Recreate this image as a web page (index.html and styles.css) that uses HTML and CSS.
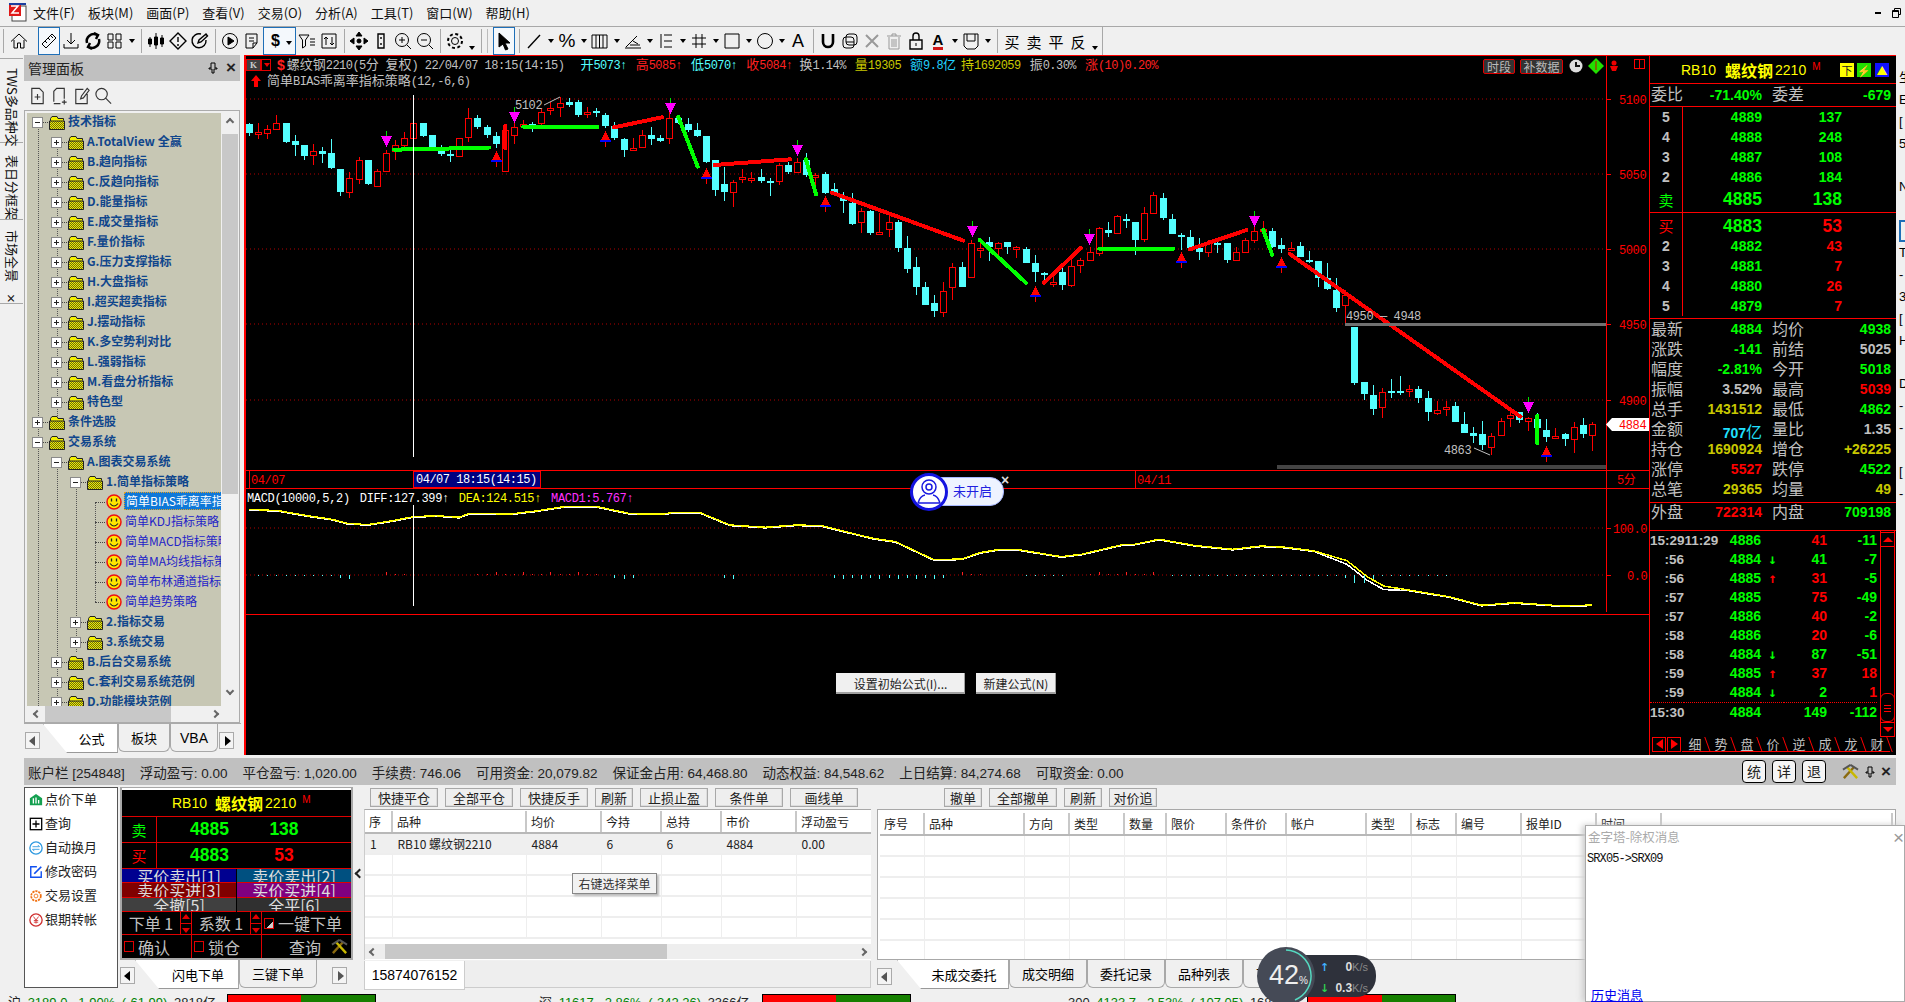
FILE: index.html
```html
<!DOCTYPE html>
<html lang="zh-CN">
<head>
<meta charset="utf-8">
<title>金字塔决策交易系统</title>
<link rel="stylesheet" href="styles.css">
</head>
<body>
<svg class="defs" width="0" height="0">
  <symbol id="plus" viewBox="0 0 11 11"><rect x=".5" y=".5" width="10" height="10" fill="#fff" stroke="#8a8a8a"/><path d="M3 5.5H8M5.5 3V8" stroke="#222"/></symbol>
  <symbol id="minus" viewBox="0 0 11 11"><rect x=".5" y=".5" width="10" height="10" fill="#fff" stroke="#8a8a8a"/><path d="M3 5.5H8" stroke="#222"/></symbol>
  <pattern id="dith" width="2" height="2" patternUnits="userSpaceOnUse"><rect width="2" height="2" fill="#f4f000"/><rect width="1" height="1" fill="#6a6a10"/><rect x="1" y="1" width="1" height="1" fill="#6a6a10"/></pattern>
  <symbol id="folder" viewBox="0 0 16 15"><path d="M1.500 13.500V3.500L3 1.500H8L9 3.500H14.500V5.500" fill="#f4f000" stroke="#222"/><path d="M.5 14.500V6H15.500V14.500Z" fill="url(#dith)" stroke="#222"/></symbol>
  <symbol id="smile" viewBox="0 0 16 16"><circle cx="8" cy="8" r="7" fill="#ffe600" stroke="#f01010" stroke-width="1.500"/><path d="M5.500 4.500V7.500M10.500 4.500V7.500" stroke="#222" stroke-width="1.300"/><path d="M4 9.500Q8 14.500 12 9.500" fill="none" stroke="#222" stroke-width="1.200"/></symbol>
  <symbol id="tools" viewBox="0 0 18 18"><path d="M2 16L13 4" stroke="#8a6a10" stroke-width="2.500"/><path d="M16 16L5 4" stroke="#c8b800" stroke-width="2.500"/><path d="M9 2L17 7M9 2L1 7" stroke="#555" stroke-width="2"/></symbol>
  <symbol id="pin" viewBox="0 0 10 12"><path d="M3 1H7V6H9V7H6V11H4V7H1V6H3Z" fill="none" stroke="#000"/></symbol>
</svg>

<header class="menubar">
  <span class="logo"><svg width="19" height="20" viewBox="0 0 19 20"><rect x="4" y="3" width="14" height="15" fill="#fff" stroke="#444"/><rect x="1" y="1" width="12" height="12" fill="#e01818"/><path d="M3 3H10L4 10H11" fill="none" stroke="#fff" stroke-width="1.500"/><rect x="1" y="0" width="17" height="2" fill="#1c3ea0"/></svg></span>
  <nav class="menu"><span>文件(F)</span><span>板块(M)</span><span>画面(P)</span><span>查看(V)</span><span>交易(O)</span><span>分析(A)</span><span>工具(T)</span><span>窗口(W)</span><span>帮助(H)</span></nav>
  <span class="winbtns"><svg width="8" height="4"><rect y="1" width="6" height="2" fill="#000"/></svg><svg width="9" height="10" viewBox="0 0 9 10"><path d="M2.500 2.500V.5H8.500V6.500H6.500M.5 2.500H6.500V9.500H.5Z" fill="none" stroke="#000"/><path d="M.5 3.500H6.500" stroke="#000"/></svg></span>
</header>

<div class="toolbar">
  <i class="sep first"></i>
  <span class="tb"><svg viewBox="0 0 20 20"><path d="M2 10.500L10 3L18 10.500M5 9V17H8.500V12H11.500V17H15V9"/></svg></span>
  <span class="tb sel gapl"><svg viewBox="0 0 20 20"><path d="M3 13L13 3L17 7L7 17ZM6 10L8 12M9 7L11 9M12 5L14 7"/></svg></span>
  <span class="tb"><svg viewBox="0 0 20 20"><path d="M10 2V13M6 9L10 13L14 9M3 13V17H17V13"/></svg></span>
  <span class="tb"><svg viewBox="0 0 20 20"><path class="thick" d="M4 12A7 7 0 0 1 14 4M16 8A7 7 0 0 1 6 16M11 2L15 4L13 8M9 18L5 16L7 12"/></svg></span>
  <span class="tb"><svg viewBox="0 0 20 20"><path d="M3 3H8V9H3ZM11 3H16V9H11ZM3 11H8V17H3ZM11 11H16V17H11Z"/></svg></span><i class="dd"></i>
  <i class="sep"></i>
  <span class="tb"><svg viewBox="0 0 20 20"><path d="M4 6V16M10 2V18M16 4V16"/><path class="fill" d="M2.500 8H5.500V13H2.500ZM8.500 6H11.500V14H8.500ZM14.500 7H17.500V13H14.500Z"/></svg></span>
  <span class="tb"><svg viewBox="0 0 20 20"><path class="thin2" d="M10 2L18 10L10 18L2 10ZM10 6V11M10 13V15"/></svg></span>
  <span class="tb"><svg viewBox="0 0 20 20"><path class="thin2" d="M16 9A7 7 0 1 1 11 3M8 12L9 9L16 3L17.500 5L11 11Z"/></svg></span>
  <i class="sep"></i>
  <span class="tb"><svg viewBox="0 0 20 20"><circle cx="10" cy="10" r="7.500"/><path class="fill" d="M8 6L14 10L8 14Z"/></svg></span>
  <span class="tb"><svg viewBox="0 0 20 20"><path d="M4 3H15V12L11 17H4ZM7 7H12M7 10H12M15 12H11V17"/></svg></span>
  <span class="tb sel wide"><b class="glyph">$</b><i class="dd"></i></span>
  <span class="tb"><svg viewBox="0 0 20 20"><path d="M2 4H12L8.500 9V15L5.500 17V9ZM13 8H18M13 11H18M13 14H18"/></svg></span>
  <span class="tb"><svg viewBox="0 0 20 20"><path d="M3 3H17V17H3ZM7 6V14M5 8L7 6L9 8M13 14V6M11 12L13 14L15 12"/></svg></span>
  <i class="sep"></i>
  <span class="tb"><svg viewBox="0 0 20 20"><path class="fill" d="M10 1L13 5H7ZM10 19L7 15H13ZM1 10L5 7V13ZM19 10L15 13V7Z"/><circle class="fill" cx="10" cy="10" r="2"/></svg></span>
  <span class="tb"><svg viewBox="0 0 20 20"><path class="thin2" d="M7 3H13V17H7ZM10 6V8M10 12V14"/></svg></span>
  <span class="tb"><svg viewBox="0 0 20 20"><circle cx="9" cy="9" r="6.500"/><path d="M14 14L18 18M6 9H12M9 6V12"/></svg></span>
  <span class="tb"><svg viewBox="0 0 20 20"><circle cx="9" cy="9" r="6.500"/><path d="M14 14L18 18M6 9H12"/></svg></span>
  <i class="sep"></i>
  <span class="tb"><svg viewBox="0 0 20 20"><circle cx="10" cy="10" r="3.500"/><circle class="dash" cx="10" cy="10" r="7"/></svg></span><i class="dd low"></i>
  <i class="sep"></i><i class="grip"></i>
  <span class="tb sel"><svg viewBox="0 0 20 20"><path class="fill" d="M5 2L16 12H11L14 18L11.500 19L9 13L5 16Z"/></svg></span>
  <i class="sep"></i>
  <span class="tb"><svg viewBox="0 0 20 20"><path class="thin2" d="M4 17L16 4"/></svg></span><i class="dd"></i>
  <span class="tb"><b class="glyph big">%</b></span><i class="dd"></i>
  <span class="tb"><svg viewBox="0 0 20 20"><path d="M2 4H17V17H2ZM6 4V17M9.500 4V17M13 4V17"/></svg></span><i class="dd"></i>
  <span class="tb"><svg viewBox="0 0 20 20"><path d="M2 17H18M3 16L14 5M7 14H17M10 10L15 13"/></svg></span><i class="dd"></i>
  <span class="tb"><svg viewBox="0 0 20 20"><path d="M5 3V17M8 4H16M8 10H16M8 16H16"/></svg></span><i class="dd"></i>
  <span class="tb"><svg viewBox="0 0 20 20"><path d="M7 3V17M13 3V17M3 7H17M3 13H17"/></svg></span><i class="dd"></i>
  <span class="tb"><svg viewBox="0 0 20 20"><path d="M3 3H17V17H3Z"/></svg></span><i class="dd"></i>
  <span class="tb"><svg viewBox="0 0 20 20"><circle cx="10" cy="10" r="7.500"/></svg></span><i class="dd"></i>
  <span class="tb"><b class="glyph thinf">A</b></span>
  <i class="sep"></i>
  <span class="tb"><svg viewBox="0 0 20 20"><path class="mag" d="M5 3V11A5 5 0 0 0 15 11V3"/></svg></span>
  <span class="tb"><svg viewBox="0 0 20 20"><rect x="6" y="3" width="11" height="11" rx="3"/><rect x="3" y="6" width="11" height="11" rx="3"/><path d="M6 11H14"/></svg></span>
  <span class="tb"><svg viewBox="0 0 20 20"><path class="gray" d="M4 4L16 16M16 4L4 16"/></svg></span>
  <span class="tb"><svg viewBox="0 0 20 20"><path class="gray1" d="M5 6V18H15V6M3 5H17M8 5V3H12V5M8 8V16M10 8V16M12 8V16"/></svg></span>
  <span class="tb"><svg viewBox="0 0 20 20"><path class="thin2" d="M4 9H16V18H4ZM7 9V5A3 3 0 0 1 13 5V9"/><path d="M10 12V15"/></svg></span>
  <span class="tb"><b class="glyph ua">A</b></span><i class="dd"></i>
  <span class="tb"><svg viewBox="0 0 20 20"><path d="M3 3H17V15L14 18H6L3 15ZM6 3V10H14V3"/></svg></span><i class="dd"></i>
  <i class="sep"></i>
  <span class="tb z13">买</span><span class="tb z13">卖</span><span class="tb z13">平</span><span class="tb z13">反</span><i class="dd low"></i>
  <i class="sep end"></i>
</div>

<main class="main">
  <aside class="rail">
    <div class="railtab short">TWS多品种交</div>
    <div class="railtab">表日分框架</div>
    <div class="railtab last">市场全景<b class="railx">×</b></div>
  </aside>

  <section class="side">
    <div class="panelhead"><span>管理面板</span><span class="headbtns"><svg width="10" height="12"><use href="#pin"/></svg><b>×</b></span></div>
    <div class="sidetools">
      <svg viewBox="0 0 20 20"><path d="M4 2H12L16 6V18H4ZM7 11H13M10 8V14"/></svg>
      <svg viewBox="0 0 20 20"><path d="M4 16V5L7 2H15V13M4 18H11M15 14V19M12.500 16.500H17.500"/></svg>
      <svg viewBox="0 0 20 20"><path d="M12 3H4V18H16V8M9 13L10 10L16 2L18 4L12 12Z"/></svg>
      <svg viewBox="0 0 20 20"><circle cx="8" cy="8" r="6"/><path d="M12 12L18 18"/></svg>
    </div>
    <div class="treebox">
      <div class="treewrap">
        <div class="tree">
          <div class="row"><svg class="pm"><use href="#minus"/></svg><svg class="fd"><use href="#folder"/></svg><span>技术指标</span></div>
          <div class="row l1"><svg class="pm"><use href="#plus"/></svg><svg class="fd"><use href="#folder"/></svg><span>A.TotalView 全赢</span></div>
          <div class="row l1"><svg class="pm"><use href="#plus"/></svg><svg class="fd"><use href="#folder"/></svg><span>B.趋向指标</span></div>
          <div class="row l1"><svg class="pm"><use href="#plus"/></svg><svg class="fd"><use href="#folder"/></svg><span>C.反趋向指标</span></div>
          <div class="row l1"><svg class="pm"><use href="#plus"/></svg><svg class="fd"><use href="#folder"/></svg><span>D.能量指标</span></div>
          <div class="row l1"><svg class="pm"><use href="#plus"/></svg><svg class="fd"><use href="#folder"/></svg><span>E.成交量指标</span></div>
          <div class="row l1"><svg class="pm"><use href="#plus"/></svg><svg class="fd"><use href="#folder"/></svg><span>F.量价指标</span></div>
          <div class="row l1"><svg class="pm"><use href="#plus"/></svg><svg class="fd"><use href="#folder"/></svg><span>G.压力支撑指标</span></div>
          <div class="row l1"><svg class="pm"><use href="#plus"/></svg><svg class="fd"><use href="#folder"/></svg><span>H.大盘指标</span></div>
          <div class="row l1"><svg class="pm"><use href="#plus"/></svg><svg class="fd"><use href="#folder"/></svg><span>I.超买超卖指标</span></div>
          <div class="row l1"><svg class="pm"><use href="#plus"/></svg><svg class="fd"><use href="#folder"/></svg><span>J.摆动指标</span></div>
          <div class="row l1"><svg class="pm"><use href="#plus"/></svg><svg class="fd"><use href="#folder"/></svg><span>K.多空势利对比</span></div>
          <div class="row l1"><svg class="pm"><use href="#plus"/></svg><svg class="fd"><use href="#folder"/></svg><span>L.强弱指标</span></div>
          <div class="row l1"><svg class="pm"><use href="#plus"/></svg><svg class="fd"><use href="#folder"/></svg><span>M.看盘分析指标</span></div>
          <div class="row l1"><svg class="pm"><use href="#plus"/></svg><svg class="fd"><use href="#folder"/></svg><span>特色型</span></div>
          <div class="row"><svg class="pm"><use href="#plus"/></svg><svg class="fd"><use href="#folder"/></svg><span>条件选股</span></div>
          <div class="row"><svg class="pm"><use href="#minus"/></svg><svg class="fd"><use href="#folder"/></svg><span>交易系统</span></div>
          <div class="row l1"><svg class="pm"><use href="#minus"/></svg><svg class="fd"><use href="#folder"/></svg><span>A.图表交易系统</span></div>
          <div class="row l2"><svg class="pm"><use href="#minus"/></svg><svg class="fd"><use href="#folder"/></svg><span>1.简单指标策略</span></div>
          <div class="row leaf"><svg class="sm"><use href="#smile"/></svg><span class="picked">简单BIAS乖离率指标策略</span></div>
          <div class="row leaf"><svg class="sm"><use href="#smile"/></svg><span>简单KDJ指标策略</span></div>
          <div class="row leaf"><svg class="sm"><use href="#smile"/></svg><span>简单MACD指标策略</span></div>
          <div class="row leaf"><svg class="sm"><use href="#smile"/></svg><span>简单MA均线指标策略</span></div>
          <div class="row leaf"><svg class="sm"><use href="#smile"/></svg><span>简单布林通道指标策略</span></div>
          <div class="row leaf"><svg class="sm"><use href="#smile"/></svg><span>简单趋势策略</span></div>
          <div class="row l2"><svg class="pm"><use href="#plus"/></svg><svg class="fd"><use href="#folder"/></svg><span>2.指标交易</span></div>
          <div class="row l2"><svg class="pm"><use href="#plus"/></svg><svg class="fd"><use href="#folder"/></svg><span>3.系统交易</span></div>
          <div class="row l1"><svg class="pm"><use href="#plus"/></svg><svg class="fd"><use href="#folder"/></svg><span>B.后台交易系统</span></div>
          <div class="row l1"><svg class="pm"><use href="#plus"/></svg><svg class="fd"><use href="#folder"/></svg><span>C.套利交易系统范例</span></div>
          <div class="row l1"><svg class="pm"><use href="#plus"/></svg><svg class="fd"><use href="#folder"/></svg><span>D.功能模块范例</span></div>
        </div>
        <div class="vscroll"><i class="chev up"></i><i class="vthumb"></i><i class="chev down"></i></div>
      </div>
      <div class="hscroll"><i class="chev left"></i><i class="hthumb"></i><i class="chev right"></i></div>
    </div>
    <div class="tabs sidetabs">
      <i class="tabarrow l"></i>
      <span class="tab on t1">公式</span><span class="tab t2">板块</span><span class="tab t3">VBA</span>
      <i class="tabarrow r dark"></i>
    </div>
  </section>

  <section class="chart">
    <div class="plot">
      <svg id="plot" class="plotsvg" viewBox="244 55 1405 700" width="1405" height="700">
        <g id="grid" class="gridlines">
          <path d="M246 99H1606M246 174H1606M246 249H1606M246 324H1606M246 400H1606M246 528H1606M246 575H1606"/>
        </g>
        <path class="redline" d="M244.500 55V755M245.500 55V755M244 470H1649M244 488H1649M244 614H1649M1606.500 55V470M1606.500 488V612M1606 99H1611M1606 174H1611M1606 249H1611M1606 324H1611M1606 400H1611M1606 528H1611M1606 575H1611M249.500 471V488M1135.500 471V488M1606.500 471V488"/>
        <g id="series"></g>
        <rect class="navy" x="413.500" y="471.500" width="127" height="16"/>
        <text class="ax" x="1619" y="104">5100</text>
        <text class="ax" x="1619" y="179">5050</text>
        <text class="ax" x="1619" y="254">5000</text>
        <text class="ax" x="1619" y="329">4950</text>
        <text class="ax" x="1619" y="405">4900</text>
        <text class="ax" x="1613" y="533">100.0</text>
        <text class="ax" x="1627" y="580">0.0</text>
        <text class="ax" x="251" y="484">04/07</text>
        <text class="ax" x="1137" y="484">04/11</text>
        <text class="ax cj" x="1617" y="484">5分</text>
        <text class="wt" x="416" y="483">04/07 18:15(14:15)</text>
        <text class="gy" x="515" y="109">5102</text>
        <path class="gyl" d="M544 105L560 97"/>
        <text class="gy" x="1346" y="320">4950 — 4948</text>
        <text class="gy" x="1444" y="454">4863</text>
        <path class="gyl" d="M1474 448L1490 455"/>
        <path class="tag" d="M1606 424.500L1612 418H1649V431H1612Z"/>
        <text class="ax" x="1619" y="429">4884</text>
      </svg>
      <div class="ttl ttl1">
        <span class="kbox">K</span><span class="kdrop"></span><b class="dollar">$</b>
        <span class="t gy1 gapt"><em>螺纹钢</em>2210(5<em>分</em> <em>复权</em>) 22/04/07 18:15(14:15)</span>
        <span class="t cy gapo"><em>开</em>5073↑</span><span class="t rd"><em>高</em>5085↑</span><span class="t cy"><em>低</em>5070↑</span><span class="t rd"><em>收</em>5084↑</span>
        <span class="t gy1 tight2"><em>换</em>1.14%</span><span class="t ye"><em>量</em>19305</span><span class="t bl"><em>额</em>9.8<em>亿</em></span><span class="t ye tight4"><em>持</em>1692059</span><span class="t gy1"><em>振</em>0.30%</span><span class="t rd"><em>涨</em>(10)0.20%</span>
      </div>
      <div class="ttl ttl2"><svg width="10" height="12" viewBox="0 0 10 12"><path d="M5 0L10 6H7V12H3V6H0Z" fill="#f00"/></svg><span class="t gy1"><em>简单</em>BIAS<em>乖离率指标策略</em>(12,-6,6)</span></div>
      <div class="ttl ttl3"><span class="t wh">MACD(10000,5,2)</span><span class="t wh">DIFF:127.399↑</span><span class="t yy">DEA:124.515↑</span><span class="t mg">MACD1:5.767↑</span></div>
      <div class="chipset">
        <span class="chip c1">时段</span><span class="chip c2">补数据</span>
        <svg width="14" height="14" viewBox="0 0 14 14"><circle cx="7" cy="7" r="6.500" fill="#ddd"/><path d="M7 3V7H11" stroke="#111" stroke-width="2" fill="none"/></svg>
        <svg width="16" height="16" viewBox="0 0 16 16"><path d="M8 0L16 8L8 16L0 8Z" fill="#22e000"/><path d="M8 3V12" stroke="#c00"/></svg>
        <svg width="10" height="12" viewBox="0 0 10 12"><circle cx="5" cy="3" r="2.500" fill="#e00"/><path d="M1 6H9L7 11H3Z" fill="#e00"/></svg>
      </div>
      <i class="splitbox"></i>
      <div class="action"><button class="winbtn b1">设置初始公式(I)...</button><button class="winbtn b2">新建公式(N)</button></div>
    </div>

    <aside class="quote">
      <div class="qhead">
        <span class="qn1">RB10</span><b class="qn2">螺纹钢</b><span class="qn3">2210</span><sup class="qn4">M</sup>
        <i class="qico yl">下</i><i class="qico gr">⚡</i><i class="qico bu">▲</i>
      </div>
      <div class="qline four"><span>委比</span><b class="g">-71.40%</b><span>委差</span><b class="g">-679</b></div>
      <div class="book">
        <span class="n">5</span><b class="g">4889</b><b class="g">137</b>
        <span class="n">4</span><b class="g">4888</b><b class="g">248</b>
        <span class="n">3</span><b class="g">4887</b><b class="g">108</b>
        <span class="n">2</span><b class="g">4886</b><b class="g">184</b>
        <span class="n tall g lab">卖</span><b class="g tall bigv">4885</b><b class="g tall bigv">138</b>
      </div>
      <div class="book bids">
        <span class="n tall2 r lab">买</span><b class="g tall2 bigv">4883</b><b class="r tall2 bigv">53</b>
        <span class="n">2</span><b class="g">4882</b><b class="r">43</b>
        <span class="n">3</span><b class="g">4881</b><b class="r">7</b>
        <span class="n">4</span><b class="g">4880</b><b class="r">26</b>
        <span class="n">5</span><b class="g">4879</b><b class="r">7</b>
      </div>
      <div class="stats">
        <span>最新</span><b class="g">4884</b><span>均价</span><b class="g">4938</b>
        <span>涨跌</span><b class="g">-141</b><span>前结</span><b class="s">5025</b>
        <span>幅度</span><b class="g">-2.81%</b><span>今开</span><b class="g">5018</b>
        <span>振幅</span><b class="s">3.52%</b><span>最高</span><b class="r">5039</b>
        <span>总手</span><b class="y">1431512</b><span>最低</span><b class="g">4862</b>
        <span>金额</span><b class="c">707<em>亿</em></b><span>量比</span><b class="s">1.35</b>
        <span>持仓</span><b class="y">1690924</b><span>增仓</span><b class="y">+26225</b>
        <span>涨停</span><b class="r">5527</b><span>跌停</span><b class="g">4522</b>
        <span>总笔</span><b class="y">29365</b><span>均量</span><b class="y">49</b>
      </div>
      <div class="qline outer"><span>外盘</span><b class="r">722314</b><span>内盘</span><b class="g">709198</b></div>
      <div class="ticks">
        <div class="tickrows">
          <span class="tm first">15:2911:29</span><b class="g">4886</b><i></i><b class="r">41</b><b class="g">-11</b>
          <span class="tm">:56</span><b class="g">4884</b><i class="g">↓</i><b class="g">41</b><b class="g">-7</b>
          <span class="tm">:56</span><b class="g">4885</b><i class="r">↑</i><b class="r">31</b><b class="g">-5</b>
          <span class="tm">:57</span><b class="g">4885</b><i></i><b class="r">75</b><b class="g">-49</b>
          <span class="tm">:57</span><b class="g">4886</b><i></i><b class="r">40</b><b class="g">-2</b>
          <span class="tm">:58</span><b class="g">4886</b><i></i><b class="r">20</b><b class="g">-6</b>
          <span class="tm">:58</span><b class="g">4884</b><i class="g">↓</i><b class="g">87</b><b class="g">-51</b>
          <span class="tm">:59</span><b class="g">4885</b><i class="r">↑</i><b class="r">37</b><b class="r">18</b>
          <span class="tm">:59</span><b class="g">4884</b><i class="g">↓</i><b class="g">2</b><b class="r">1</b>
          <span class="tm first dot">15:30</span><b class="g dot">4884</b><i class="dot"></i><b class="g dot">149</b><b class="g dot">-112</b>
        </div>
        <div class="qscroll"><i class="qsup"></i><i class="qsthumb"></i><i class="qsdn"></i></div>
      </div>
      <div class="qtabs">
        <i class="qarrow la"></i><i class="qarrow ra"></i>
        <span class="qt on">细</span><span class="qt">势</span><span class="qt">盘</span><span class="qt">价</span><span class="qt">逆</span><span class="qt">成</span><span class="qt">龙</span><span class="qt">财</span>
      </div>
    </aside>
  </section>

  <aside class="edge"><span>生</span><span>E</span><span>[</span><span>5</span><span>&nbsp;</span><span>N</span><span>&nbsp;</span><span class="ebox"></span><span>T</span><span>-</span><span>3</span><span>[</span><span>H</span><span>&nbsp;</span><span>D</span><span>-</span><span>-</span><span>&nbsp;</span><span>[</span><span>-</span></aside>
</main>

<div class="acct">
  <span>账户栏 [254848]</span><span>浮动盈亏: 0.00</span><span>平仓盈亏: 1,020.00</span><span>手续费: 746.06</span><span>可用资金: 20,079.82</span><span>保证金占用: 64,468.80</span><span>动态权益: 84,548.62</span><span>上日结算: 84,274.68</span><span>可取资金: 0.00</span>
  <span class="acctbtns"><i>统</i><i>详</i><i>退</i><svg width="17" height="17"><use href="#tools"/></svg><svg width="10" height="12"><use href="#pin"/></svg><b>×</b></span>
</div>

<div class="lower">
  <nav class="opmenu">
    <a><svg viewBox="0 0 16 16"><path d="M8 1L15 6V14H1V6Z" fill="#14a050"/><path d="M5 6V12M8 5V12M11 8V12" stroke="#fff" stroke-width="1.500"/></svg>点价下单</a>
    <a><svg viewBox="0 0 16 16"><rect x="1.500" y="1.500" width="13" height="13" fill="#fff" stroke="#000" stroke-width="1.500"/><path d="M8 4V12M4 8H12" stroke="#000" stroke-width="1.500"/></svg>查询</a>
    <a><svg viewBox="0 0 16 16"><circle cx="8" cy="8" r="7" fill="#fff" stroke="#2f9ae0" stroke-width="1.500"/><path d="M4 6.500H12L10 4.500M12 9.500H4L6 11.500" fill="none" stroke="#2f9ae0"/></svg>自动换月</a>
    <a><svg viewBox="0 0 16 16"><path d="M9 2H2V14H14V7" fill="none" stroke="#1050f0" stroke-width="1.600"/><path d="M6 10L14 2" stroke="#1050f0" stroke-width="2"/></svg>修改密码</a>
    <a><svg viewBox="0 0 16 16"><circle cx="8" cy="8" r="5.500" fill="none" stroke="#f07010" stroke-width="2" stroke-dasharray="2.500 1"/><circle cx="8" cy="8" r="2.200" fill="none" stroke="#f07010"/></svg>交易设置</a>
    <a><svg viewBox="0 0 16 16"><circle cx="8" cy="8" r="7" fill="#fff" stroke="#d03030" stroke-width="1.500"/><path d="M5 4L8 8L11 4M8 8V12M5.500 8.500H10.500M5.500 10.500H10.500" fill="none" stroke="#d03030"/></svg>银期转帐</a>
  </nav>

  <div class="flash">
    <div class="mini">
      <div class="mhead"><span class="qn1">RB10</span><b class="qn2">螺纹钢</b><span class="qn3">2210</span><sup class="qn4">M</sup></div>
      <div class="mrow"><span class="g">卖</span><b class="g">4885</b><b class="g">138</b></div>
      <div class="mrow"><span class="r">买</span><b class="g">4883</b><b class="r">53</b></div>
      <div class="mbtns">
        <span class="navyb">买价卖出[1]</span><span class="tealb">卖价卖出[2]</span>
        <span class="maroonb">卖价买进[3]</span><span class="purpleb">买价买进[4]</span>
        <span class="grayb">全撤[5]</span><span class="darkb">全平[6]</span>
      </div>
      <div class="mopt o1"><span>下单 1</span><i class="spin"></i><span>系数 1</span><i class="spin"></i><span class="opt"><i class="cb chk"></i>一键下单</span></div>
      <div class="mopt o2"><span class="opt"><i class="cb"></i>确认</span><span class="opt"><i class="cb"></i>锁仓</span><span class="opt end">查询<svg width="17" height="17"><use href="#tools"/></svg></span></div>
    </div>
    <div class="tabs flashtabs">
      <i class="tabarrow l dark"></i>
      <span class="tab on t4">闪电下单</span><span class="tab t5">三键下单</span>
      <i class="tabarrow r gap"></i>
    </div>
  </div>

  <div class="collapse"><i class="chev left blk"></i></div>

  <div class="pos">
    <div class="btnrow"><button>快捷平仓</button><button>全部平仓</button><button>快捷反手</button><button class="w38">刷新</button><button>止损止盈</button><button>条件单</button><button>画线单</button></div>
    <div class="tblbox">
      <div class="tblclip">
        <table class="grid left">
          <colgroup><col class="c27"><col class="c134"><col class="c75"><col class="c60"><col class="c60"><col class="c75"><col class="c76"></colgroup>
          <thead><tr><th>序</th><th>品种</th><th>均价</th><th>今持</th><th>总持</th><th>市价</th><th>浮动盈亏</th></tr></thead>
          <tbody>
            <tr class="hl"><td>1</td><td>RB10 螺纹钢2210</td><td>4884</td><td>6</td><td>6</td><td>4884</td><td>0.00</td></tr>
            <tr><td></td><td></td><td></td><td></td><td></td><td></td><td></td></tr>
            <tr><td></td><td></td><td></td><td></td><td></td><td></td><td></td></tr>
            <tr><td></td><td></td><td></td><td></td><td></td><td></td><td></td></tr>
            <tr><td></td><td></td><td></td><td></td><td></td><td></td><td></td></tr>
          </tbody>
        </table>
      </div>
      <div class="hscroll big"><i class="chev left"></i><i class="hthumb wide"></i><i class="chev right"></i></div>
    </div>
    <div class="tabs acctabs"><span class="tab on t6">15874076152</span><span class="rest"></span></div>
  </div>

  <div class="orders">
    <div class="btnrow rb"><button class="w38">撤单</button><button>全部撤单</button><button class="w38">刷新</button><button class="w48">对价追</button></div>
    <div class="tblbox rtb">
      <table class="grid right">
        <colgroup><col class="d44"><col class="d100"><col class="d45"><col class="d55"><col class="d42"><col class="d60"><col class="d60"><col class="d80"><col class="d45"><col class="d45"><col class="d65"><col class="d75"><col class="d65"><col></colgroup>
        <thead><tr><th>序号</th><th>品种</th><th>方向</th><th>类型</th><th>数量</th><th>限价</th><th>条件价</th><th>帐户</th><th>类型</th><th>标志</th><th>编号</th><th>报单ID</th><th>时间</th><th></th></tr></thead>
        <tbody>
          <tr><td></td><td></td><td></td><td></td><td></td><td></td><td></td><td></td><td></td><td></td><td></td><td></td><td></td><td></td></tr>
          <tr><td></td><td></td><td></td><td></td><td></td><td></td><td></td><td></td><td></td><td></td><td></td><td></td><td></td><td></td></tr>
          <tr><td></td><td></td><td></td><td></td><td></td><td></td><td></td><td></td><td></td><td></td><td></td><td></td><td></td><td></td></tr>
          <tr><td></td><td></td><td></td><td></td><td></td><td></td><td></td><td></td><td></td><td></td><td></td><td></td><td></td><td></td></tr>
          <tr><td></td><td></td><td></td><td></td><td></td><td></td><td></td><td></td><td></td><td></td><td></td><td></td><td></td><td></td></tr>
          <tr><td></td><td></td><td></td><td></td><td></td><td></td><td></td><td></td><td></td><td></td><td></td><td></td><td></td><td></td></tr>
        </tbody>
      </table>
    </div>
    <div class="tabs ordertabs">
      <i class="tabarrow l"></i>
      <span class="tab on t7">未成交委托</span><span class="tab t8">成交明细</span><span class="tab t8">委托记录</span><span class="tab t8">品种列表</span><span class="tab t8">下单列表</span>
    </div>
  </div>
</div>

<footer class="status">
  <span class="idx i1">沪 <u>3189.0</u> <u>-1.90%</u> <u>(-61.99)</u> 2818亿</span><i class="bar"></i>
  <span class="idx i2">深 <u>11617</u> <u>-2.86%</u> <u>(-342.26)</u> 3366亿</span><i class="bar"></i>
  <span class="idx i3">300 <u>4133.7</u> <u>-2.53%</u> <u>(-107.05)</u> 1682亿</span><i class="bar"></i>
</footer>

<div class="tip">右键选择菜单</div>

<div class="cam">
  <span class="camhead"><svg width="26" height="28" viewBox="0 0 26 28"><circle cx="13" cy="9" r="7" fill="none" stroke="#1a1ae0" stroke-width="1.500"/><circle cx="13" cy="9" r="3" fill="none" stroke="#1a1ae0" stroke-width="1.500"/><path d="M2 25Q4 18 9 17M24 25Q22 18 17 17M2 25H24" fill="none" stroke="#1a1ae0" stroke-width="1.500"/></svg></span>
  <span class="camtxt">未开启</span><b class="camx">×</b>
</div>

<div class="speed">
  <div class="speedpill">
    <span class="sp"><i class="up">↑</i><b>0</b><em>K/s</em></span>
    <span class="sp"><i class="dn">↓</i><b>0.3</b><em>K/s</em></span>
  </div>
  <div class="gauge"><svg width="58" height="58" viewBox="0 0 58 58"><path d="M29 3A26 26 0 0 1 38 53" fill="none" stroke="#55d8c0" stroke-width="1.500"/></svg><span class="pct">42<small>%</small></span></div>
</div>

<aside class="notice">
  <div class="ntitle"><span>金字塔-除权消息</span><b>×</b></div>
  <div class="nbody">SRX05-&gt;SRX09</div>
  <a class="nlink">历史消息</a>
</aside>

<script src="chart.js"></script>
</body>
</html>
```

FILE: styles.css
```css
* { box-sizing: border-box; }
html, body { margin: 0; padding: 0; }
body {
  width: 1905px; height: 1002px; overflow: hidden; position: relative;
  background: #f0f0f0; color: #000;
  font: 13px/1.2 "Liberation Sans", "Noto Sans CJK SC", sans-serif;
}
i, em { font-style: normal; }
.defs { position: absolute; }
.g { color: #00ff00; } .r { color: #ff0000; } .y { color: #c8c800; } .c { color: #20e0ff; } .s { color: #c0c0c0; }

/* menu */
.menubar { height: 27px; display: flex; align-items: center; border-bottom: 1px solid #a8a8a8; padding-left: 8px; }
.logo { width: 25px; height: 20px; }
.menu { display: flex; gap: 13px; font-family: "Noto Sans CJK SC", sans-serif; color: #111; }
.menu span { white-space: nowrap; }
.winbtns { margin-left: auto; margin-right: 4px; display: flex; gap: 9px; align-items: center; }

/* toolbar */
.toolbar { height: 28px; display: flex; align-items: center; position: relative; }
.sep { width: 1px; height: 24px; background: #a8a8a8; margin: 0 3.500px; flex: none; }
.sep.first { margin: 0 4px 0 3px; }
.sep.end { margin: 0 0 0 2px; height: 28px; }
.grip { width: 2px; height: 24px; border-left: 1px solid #bbb; margin: 0 4px 0 2px; flex: none; }
.tb { width: 22px; height: 28px; display: flex; align-items: center; justify-content: center; flex: none; position: relative; }
.tb svg { width: 20px; height: 20px; fill: none; stroke: #000; stroke-width: 1; }
.tb .fill { fill: #000; }
.tb .thick { stroke-width: 2.5; }
.tb .thin2 { stroke-width: 1.4; }
.tb .mag { stroke-width: 2.6; }
.tb .gray { stroke: #999; stroke-width: 2; }
.tb .gray1 { stroke: #999; }
.tb .dash { stroke-width: 2; stroke-dasharray: 3 2.5; }
.tb.sel { border: 1px solid #1e6fb8; height: 28px; background: #f4f8fc; }
.tb.gapl { margin-left: 8px; }
.tb.wide { width: 33px; justify-content: flex-start; padding-left: 7px; }
.dd { width: 0; height: 0; border: 3px solid transparent; border-top: 4px solid #000; border-bottom: 0; margin: 0 2.500px; flex: none; }
.dd.low { margin-top: 14px; }
.tb.wide .dd { position: absolute; right: 1px; top: 13px; }
.glyph { font: bold 16px "Liberation Sans", sans-serif; }
.glyph.big { font: 19px "Liberation Sans", sans-serif; }
.glyph.thinf { font: 18px "Liberation Sans", sans-serif; }
.glyph.ua { font: bold 15px "Liberation Sans", sans-serif; border-bottom: 3px solid #d01818; line-height: 14px; }
.z13 { font: 15px "Noto Sans CJK SC", sans-serif; }

/* main */
.main { display: flex; height: 700px; }
.rail { width: 24px; flex: none; padding-top: 3px; }
.railtab { writing-mode: vertical-rl; text-orientation: sideways; height: 77px; width: 23px; padding-top: 12px; display: flex; align-items: center; font: 13px/22px "Noto Sans CJK SC", sans-serif; border-bottom: 1px solid #a8a8a8; color: #111; white-space: nowrap; }
.railtab.short { height: 85px; border-top: 1px solid #a8a8a8; padding-top: 9px; }
.railtab.last { height: 84px; padding-top: 10px; }
.railx { font: 15px "Liberation Sans", sans-serif; margin-top: 12px; }

.side { width: 216px; flex: none; margin-right: 4px; }
.panelhead { height: 26px; background: #c0c0c0; display: flex; align-items: center; justify-content: space-between; padding: 0 4px 0 4px; font: 14px "Noto Sans CJK SC", sans-serif; color: #222; }
.headbtns { display: flex; gap: 8px; align-items: center; }
.headbtns b, .acctbtns b { font: bold 17px "Liberation Sans", sans-serif; }
.sidetools { height: 29px; display: flex; align-items: center; gap: 3px; padding-left: 4px; }
.sidetools svg { width: 19px; height: 20px; fill: none; stroke: #333; stroke-width: 1.2; }
.treebox { height: 613px; border: 1px solid #ababab; border-left-width: 1px; background: #f0f0f0; }
.treewrap { height: 595px; display: flex; }
.tree {
  width: 194px; margin: 2px 0 0 2px; overflow: hidden; background-color: #c7c7b4; flex: none;
  background-image:
    repeating-linear-gradient(to bottom, #555 0 1px, transparent 1px 2px),
    repeating-linear-gradient(to bottom, #555 0 1px, transparent 1px 2px),
    repeating-linear-gradient(to bottom, #555 0 1px, transparent 1px 2px),
    repeating-linear-gradient(to bottom, #555 0 1px, transparent 1px 2px),
    repeating-linear-gradient(to bottom, #555 0 1px, transparent 1px 2px);
  background-repeat: no-repeat;
  background-size: 1px 100%, 1px 280px, 1px 250px, 1px 170px, 1px 100px;
  background-position: 11px 10px, 30px 24px, 30px 350px, 49px 370px, 68px 390px;
}
.row { height: 20px; display: flex; align-items: center; padding: 0 0 3px 5px; position: relative; font: bold 12px "Noto Sans CJK SC", sans-serif; color: #10468c; white-space: nowrap; }
.row:first-child { margin-top: -1px; }
.row.l1 { padding-left: 24px; }
.row.l2 { padding-left: 43px; }
.row.leaf { padding-left: 79px; font-weight: 400; color: #2424c8; }
.row::before { content: ""; position: absolute; width: 7px; left: 14px; top: 10px; border-top: 1px dotted #444; }
.row.l1::before { left: 33px; }
.row.l2::before { left: 52px; }
.row.leaf::before { left: 68px; width: 10px; }
.pm { width: 11px; height: 11px; flex: none; margin-top: 3px; position: relative; }
.fd { width: 16px; height: 15px; flex: none; margin: 3px 3px 0 6px; position: relative; }
.sm { width: 16px; height: 16px; flex: none; margin: 3px 3px 0 0; position: relative; }
.picked { background: #0f78d8; color: #fff; outline: 1px dotted #e8a020; outline-offset: -1px; line-height: 18px; padding-left: 2px; margin-left: -1px; }
.vscroll { width: 16px; margin-left: 1px; position: relative; display: flex; flex-direction: column; align-items: center; }
.vthumb { width: 16px; height: 360px; background: #c8c8c8; margin-top: 9px; }
.chev { width: 6px; height: 6px; border-left: 2px solid #666; border-top: 2px solid #666; flex: none; }
.chev.up { transform: rotate(45deg); margin-top: 8px; }
.chev.down { transform: rotate(225deg); margin-top: auto; margin-bottom: 12px; }
.chev.left { transform: rotate(-45deg); }
.chev.right { transform: rotate(135deg); margin-left: auto; }
.chev.blk { border-color: #222; width: 7px; height: 7px; }
.hscroll { height: 16px; display: flex; align-items: center; padding: 0 21px 0 9px; background: #f0f0f0; }
.hthumb { width: 126px; height: 16px; background: #c8c8c8; margin-left: 5px; }

/* tabs */
.tabs { display: flex; align-items: flex-start; }
.tab { height: 28px; display: flex; align-items: center; justify-content: center; background: #f0f0f0; border: 1px solid #a8a8a8; border-top: 0; border-radius: 0 0 6px 6px; font: 13px "Noto Sans CJK SC", sans-serif; flex: none; }
.tab.on { background: #fff; border-bottom: 1px solid #999; height: 29px; clip-path: polygon(0 0, 100% 0, 100% 100%, 24px 100%); padding-left: 22px; border-radius: 0; }
.tabarrow { width: 15px; height: 17px; border: 1px solid #aaa; background: #f4f4f4; margin-top: 8px; position: relative; flex: none; }
.tabarrow::after { content: ""; position: absolute; left: 3px; top: 3px; border: 5px solid transparent; border-left: 0; border-right: 6px solid #555; }
.tabarrow.r::after { border-right: 0; border-left: 6px solid #555; left: 5px; }
.tabarrow.dark::after { border-right-color: #000; border-left-color: #000; }
.sidetabs { height: 30px; border-top: 1px solid #aaa; padding-left: 1px; margin-right: -1px; }
.t1 { width: 75px; margin-left: 3px; }
.t2 { width: 52px; }
.t3 { width: 48px; font-family: "Liberation Sans", sans-serif; font-size: 14px; }
.sidetabs .tabarrow.r { margin-left: 1px; }

/* chart */
.chart { width: 1652px; flex: none; display: flex; background: #000; color: #c0c0c0; border-top: 1px solid #ff0000; margin-top: 0; }
.plot { width: 1405px; flex: none; position: relative; overflow: hidden; height: 699px; }
.plotsvg { position: absolute; left: 0; top: -1px; display: block; font: 12px "Liberation Mono", monospace; }
.gridlines path { stroke: #b00000; stroke-dasharray: 1 3; fill: none; }
.redline { stroke: #ff0000; fill: none; shape-rendering: crispEdges; }
.navy { fill: #000080; stroke: #ff0000; shape-rendering: crispEdges; }
.ax { fill: #ff0000; letter-spacing: -.4px; }
.ax.cj { font-family: "Liberation Mono", "Noto Sans CJK SC", monospace; }
.wt { fill: #fff; letter-spacing: -.5px; }
.gy { fill: #c0c0c0; letter-spacing: -.4px; }
.gyl { stroke: #c0c0c0; fill: none; }
.tag { fill: #fff; }
.ttl { position: absolute; left: 2px; display: flex; align-items: center; white-space: nowrap; height: 16px; }
.t { font: 12px/16px "Liberation Mono", monospace; letter-spacing: -.55px; }
.t em { font: 13px/16px "Noto Sans CJK SC", sans-serif; letter-spacing: 0; }
.gy1 { color: #c0c0c0; } .cy { color: #54ffff; } .rd { color: #ff2020; } .ye { color: #c8c800; } .bl { color: #20d0ff; }
.wh { color: #fff; } .yy { color: #ffff00; } .mg { color: #ff30ff; }
.ttl1 { top: 1px; gap: 9px; }
.gapo { margin-left: 7px; }
.tight2 { margin-left: -2px; }
.tight4 { margin-left: -4px; }
.kbox { width: 15px; height: 12px; background: #404040; border: 1px solid #e00000; color: #ccc; font: bold 9px/10px "Liberation Serif", serif; text-align: center; margin-right: -9px; }
.kdrop { width: 10px; height: 12px; border: 1px solid #e00000; position: relative; margin-right: -3px; }
.kdrop::after { content: ""; position: absolute; left: 2px; top: 3px; border: 3px solid transparent; border-top: 4px solid #e00; border-bottom: 0; }
.dollar { color: #ff2020; font: bold 14px "Liberation Sans", sans-serif; margin-right: -7px; }
.ttl2 { top: 17px; left: 7px; gap: 6px; }
.ttl3 { top: 435px; left: 3px; gap: 10px; }
.ttl3 .t { letter-spacing: -.35px; }
.chipset { position: absolute; left: 1239px; top: 2px; display: flex; align-items: center; gap: 5px; }
.chip { height: 15px; background: #333; border: 1px solid #e00000; border-radius: 2px; color: #bbb; font: 12px/13px "Noto Sans CJK SC", sans-serif; text-align: center; }
.c1 { width: 32px; } .c2 { width: 43px; margin-left: 0; margin-right: 1px; }
.splitbox { position: absolute; left: 1390px; top: 3px; width: 11px; height: 10px; border: 1px solid #ff0000; background: linear-gradient(#ff0000,#ff0000) center/1px 100% no-repeat; }
.action { position: absolute; left: 592px; top: 617px; display: flex; gap: 11px; }
.winbtn { height: 21px; border: 0; background: #f0f0f0; box-shadow: inset -1px -2px 0 #a0a0a0; padding: 0; font: 12px "Noto Sans CJK SC", sans-serif; color: #222; }
.b1 { width: 129px; } .b2 { width: 80px; }

/* quote */
.quote { width: 247px; flex: none; border-left: 1px solid #ff0000; font: 16px/20px "Noto Sans CJK SC", sans-serif; height: 699px; display: flex; flex-direction: column; }
.quote b { font: bold 14px/20px "Liberation Sans", sans-serif; text-align: right; }
.qhead { height: 28px; border-bottom: 1px solid #ff0000; display: flex; align-items: center; padding: 0 7px 0 31px; color: #ffff00; position: relative; }
.qn1 { font: 14px "Liberation Sans", sans-serif; color: #ffff00; }
.qn2 { font: bold 16px "Noto Sans CJK SC", sans-serif !important; color: #ffff00; margin-left: 9px; }
.qn3 { font: 14px "Liberation Sans", sans-serif; color: #ffff00; margin-left: 2px; }
.qn4 { font: 10px "Liberation Sans", sans-serif; color: #ff0000; margin: -7px 0 0 6px; }
.qico { width: 14px; height: 14px; font: 11px/14px "Noto Sans CJK SC", sans-serif; text-align: center; flex: none; }
.yl { background: #ffff00; color: #222; margin-left: auto; }
.gr { background: #20e000; color: #d00; margin-left: 3px; }
.bu { background: #1010ff; color: #ff0; margin-left: 4px; }
.four, .outer { display: grid; grid-template-columns: 36px 75px 10px 32px 87px; padding-left: 1px; }
.qline span:nth-of-type(2) { grid-column: 4; white-space: nowrap; }
.four { height: 23px; border-bottom: 1px solid #ff0000; line-height: 18px; }
.four b { line-height: 22px; }
.book { display: grid; grid-template-columns: 33px 79px 80px; border-bottom: 1px solid #ff0000; grid-auto-rows: 20px; }
.book .n { text-align: center; border-right: 1px solid #ff0000; color: #c0c0c0; font: bold 14px/20px "Liberation Sans", sans-serif; }
.book .lab { font: 15px/23px "Noto Sans CJK SC", sans-serif; }
.book.bids .lab { line-height: 25px; color: #ff0000; }
.book.bids { padding-bottom: 2px; }
.book .tall { height: 25px; line-height: 25px; }
.book .tall.g.lab { color: #00ff00; }
.book .tall2 { height: 23px; line-height: 27px; }
.book { grid-template-rows: repeat(4,20px) 25px; }
.book.bids { grid-template-rows: 23px repeat(4,20px); }
.quote .bigv { font-size: 17.500px; }
.stats { display: grid; grid-template-columns: 36px 75px 10px 32px 87px; grid-auto-rows: 20px; padding-left: 1px; }
.stats span { white-space: nowrap; line-height: 18px; }
.stats span:nth-child(4n+3) { grid-column: 4; }
.stats em { font: 16px "Noto Sans CJK SC", sans-serif; }
.outer { margin-top: 3px; height: 29px; border-top: 1px solid #ff0000; border-bottom: 1px solid #ff0000; line-height: 16px; }
.outer b { line-height: 18px; }
.ticks { display: flex; height: 206px; }
.tickrows { width: 229px; display: grid; grid-template-columns: 34px 77px 23px 43px 50px; grid-auto-rows: 19px; }
.quote .tickrows b { line-height: 19px; }
.tickrows i { text-align: center; font: bold 14px/19px "DejaVu Sans Mono", monospace; }
.tm { font: bold 13.500px/19px "Liberation Sans", sans-serif; text-align: right; color: #c0c0c0; white-space: nowrap; }
.tm.first { text-align: left; }
.dot { border-top: 1px dotted #ff0000; }
.qscroll { width: 15px; margin-left: 1px; display: flex; flex-direction: column; border-left: 1px solid #ff0000; border-right: 1px solid #ff0000; }
.qsup, .qsdn { height: 15px; border: 1px solid #ff0000; position: relative; margin: 1px -1px 0; flex: none; }
.qsup::after, .qsdn::after { content: ""; position: absolute; left: 2px; top: 4px; border: 5px solid transparent; border-bottom: 5px solid #ff0000; border-top: 0; }
.qsdn::after { border-bottom: 0; border-top: 5px solid #ff0000; }
.qsthumb { height: 29px; margin: auto -1px 0; border: 1px solid #ff0000; border-radius: 6px; background: repeating-linear-gradient(to bottom, transparent 0 2px, #ff0000 2px 3px) center/7px 10px no-repeat; }
.qsdn { margin-top: 0; }
.qtabs { display: flex; height: 15px; padding-left: 2px; align-items: stretch; }
.qarrow { width: 14px; border: 1px solid #ff0000; position: relative; flex: none; margin-right: 1px; }
.qarrow::after { content: ""; position: absolute; left: 3px; top: 1px; border: 5px solid transparent; border-left: 0; border-right: 7px solid #ff0000; }
.qarrow.ra::after { border-right: 0; border-left: 7px solid #ff0000; }
.qt { width: 26px; text-align: center; font: 13px/14px "Noto Sans CJK SC", sans-serif; color: #c0c0c0; border-bottom: 1px solid #ff0000; position: relative; flex: none; }
.qt::after { content: ""; position: absolute; right: 0; top: 0; bottom: -1px; border-right: 1px solid #ff0000; transform: skewX(20deg); }

.edge { width: 9px; flex: none; overflow: hidden; padding-top: 12px; display: flex; flex-direction: column; font: 13px/21.900px "Liberation Sans", "Noto Sans CJK SC", sans-serif; padding-left: 3px; }
.edge span { display: block; height: 21.900px; white-space: nowrap; }
.ebox { border: 2px solid #1e6fb8; border-right: 0; }

/* account bar */
.acct { height: 27px; margin: 3px 9px 0 24px; background: #c0c0c0; display: flex; align-items: center; gap: 15px; padding-left: 4px; font: 13.500px "Liberation Sans", "Noto Sans CJK SC", sans-serif; color: #222; white-space: nowrap; }
.acctbtns { margin-left: auto; display: flex; align-items: center; gap: 6px; padding-right: 5px; }
.acctbtns i { width: 24px; height: 23px; border: 1px solid #000; border-radius: 4px; background: #f5f5f5; text-align: center; font: 14px/21px "Noto Sans CJK SC", sans-serif; }
.acctbtns svg:first-of-type { margin-left: 10px; }

/* lower */
.lower { display: flex; height: 201px; margin: 2px 0 0 24px; }
.opmenu { width: 94px; flex: none; background: #fff; border: 1px solid #555; display: flex; flex-direction: column; margin-right: 2px; }
.opmenu a { height: 24px; display: flex; align-items: center; gap: 2px; padding: 0 0 3px 4px; font: 13px "Noto Sans CJK SC", sans-serif; color: #222; }
.opmenu svg { width: 14px; height: 16px; flex: none; margin-top: 3px; }
.flash { width: 233px; flex: none; }
.mini { height: 173px; border: 1px solid #a8a8a8; border-width: 1px 2px 2px 2px; padding-top: 2px; background: #fff; display: flex; flex-direction: column; }
.mini > * { background: #000; color: #c0c0c0; flex: none; }
.mhead { height: 27px; display: flex; align-items: center; padding-left: 50px; border-bottom: 1px solid #e00000; }
.mhead .qn2 { margin-left: 8px; }
.mrow { height: 26px; display: grid; grid-template-columns: 35px 105px 44px; align-items: center; border-bottom: 1px solid #e00000; font: 15px/25px "Noto Sans CJK SC", sans-serif; text-align: center; }
.mrow span { border-right: 1px solid #e00000; height: 25px; }
.mrow b { font: bold 17.500px "Liberation Sans", sans-serif; text-align: center; }
.mbtns { display: grid; grid-template-columns: 114px 1fr; grid-auto-rows: 14.400px; gap: 0 1px; }
.mbtns span { overflow: hidden; color: #ddd; font: 16px/14px "Noto Sans CJK SC", sans-serif; text-align: center; border-bottom: 1px solid #e00000; white-space: nowrap; }
.navyb { background: #000090; } .tealb { background: #005080; } .maroonb { background: #800000; } .purpleb { background: #800080; } .grayb { background: #404040; } .darkb { background: #303030; }
.mopt { display: flex; height: 23px; align-items: center; font: 16px "Noto Sans CJK SC", sans-serif; border-bottom: 1px solid #e00000; white-space: nowrap; }
.o1 > span:nth-of-type(1) { width: 58px; text-align: center; }
.o1 > span:nth-of-type(2) { width: 58px; text-align: center; }
.spin { width: 12px; height: 23px; border-left: 1px solid #e00000; border-right: 1px solid #e00000; position: relative; background: linear-gradient(#e00000,#e00000) center/100% 1px no-repeat; flex: none; }
.spin::before, .spin::after { content: ""; position: absolute; left: 1px; border: 4px solid transparent; }
.spin::before { top: 2px; border-bottom: 5px solid #e00000; border-top: 0; }
.spin::after { bottom: 2px; border-top: 5px solid #e00000; border-bottom: 0; }
.opt { display: flex; align-items: center; gap: 4px; }
.cb { width: 10px; height: 11px; border: 1px solid #e00000; margin-left: 2px; flex: none; }
.cb.chk { background: linear-gradient(135deg, transparent 60%, #ccc 60%); }
.o2 { border-bottom: 0; }
.o2 .opt:nth-child(1) { width: 70px; border-right: 1px solid #e00000; height: 23px; }
.o2 .opt:nth-child(2) { width: 70px; border-right: 1px solid #e00000; height: 23px; }
.o2 .end { flex: 1; justify-content: flex-end; gap: 10px; padding-right: 3px; }
.flashtabs { height: 28px; }
.flashtabs .tabarrow.l { margin-top: 7px; }
.t4 { width: 104px; height: 28px; border-bottom: 1px solid #999; }
.t5 { width: 78px; }
.tabarrow.gap { margin: 7px 0 0 15px; }
.collapse { width: 11px; flex: none; display: flex; align-items: center; justify-content: flex-start; padding: 0 0 0 3px; height: 172px; }
.pos { width: 507px; flex: none; margin-right: 6px; }
.orders { width: 1019px; flex: none; }
.btnrow { display: flex; gap: 7px; height: 19px; margin-top: 1px; padding-left: 6px; }
.btnrow.rb { padding-left: 67px; }
.btnrow button { width: 68px; height: 19px; padding: 0; border: 1px solid #a8a8a8; background: #eee; font: 13px/17px "Noto Sans CJK SC", sans-serif; color: #222; box-shadow: inset -1px -1px 0 #ddd; }
.btnrow button.w38 { width: 38px; }
.btnrow button.w48 { width: 48px; }
.tblbox { height: 151px; margin-top: 2px; border-top: 1px solid #a8a8a8; background: #fff; border-left: 1px solid #ccc; overflow: hidden; }
.rtb { border: 1px solid #a8a8a8; border-bottom: 1px solid #a8a8a8; padding: 3px 2px 0; }
.tblclip { height: 134px; overflow: hidden; padding-top: 1px; }
.grid { border-collapse: collapse; table-layout: fixed; width: 100%; font: 12px "Noto Sans CJK SC", sans-serif; color: #222; }
.grid th { height: 22px; padding: 0 0 0 4px; font-weight: 400; text-align: left; border-bottom: 2px solid #b8b8b8; border-right: 2px solid #c8c8c8; background: #fff; white-space: nowrap; }
.grid td { height: 21px; padding: 0 0 0 5px; border-right: 1px solid #eee; border-bottom: 2px solid #eee; white-space: nowrap; }
.grid .hl td { background: #efefef; border-right-color: #efefef; }
.c27 { width: 27px; } .c134 { width: 134px; } .c75 { width: 75px; } .c60 { width: 60px; } .c76 { width: 76px; }
.d44 { width: 44px; } .d100 { width: 100px; } .d45 { width: 45px; } .d55 { width: 55px; } .d42 { width: 42px; } .d60 { width: 60px; } .d80 { width: 80px; } .d65 { width: 65px; } .d75 { width: 75px; }
.hscroll.big { background: #eee; padding: 0 5px; height: 15px; }
.hthumb.wide { width: 282px; height: 15px; margin-left: 9px; }
.acctabs { height: 28px; margin-top: 1px; }
.t6 { width: 101px; height: 28px; clip-path: none !important; padding: 0 !important; border: 1px solid #ccc !important; border-top: 0 !important; font-family: "Liberation Sans", sans-serif; font-size: 14px; }
.rest { flex: 1; height: 27px; background: #eee; border: 1px solid #ccc; border-left: 0; border-top: 0; }
.ordertabs { height: 28px; margin-top: 0; border-top: 0; }
.ordertabs .tabarrow { margin-top: 8px; margin-right: 5px; }
.t7 { width: 112px; }
.t8 { width: 78px; }

/* status */
.status { height: 10px; margin-top: 4px; display: flex; overflow: hidden; font: 13px/20px "Liberation Sans", "Noto Sans CJK SC", sans-serif; color: #222; white-space: nowrap; position: relative; }
.status u { text-decoration: none; color: #008000; }
.idx { height: 20px; margin-top: 1px; flex: none; word-spacing: 3px; }
.i1 { width: 219px; margin-left: 8px; }
.i2 { width: 217px; margin-left: 163px; }
.i3 { width: 239px; margin-left: 157px; }
.bar { width: 149px; height: 10px; margin-top: 2px; flex: none; border: 1px solid #000; background: linear-gradient(to right, #ff0000 50%, #178000 50%); }
.i2 + .bar { margin-left: 6px; }

/* overlays */
.tip { position: absolute; left: 572px; top: 873px; width: 85px; height: 21px; background: #f2f2f2; border: 1px solid #888; box-shadow: 2px 2px 2px #bbb; font: 12px/19px "Noto Sans CJK SC", sans-serif; color: #333; text-align: center; }
.cam { position: absolute; left: 910px; top: 473px; width: 110px; height: 40px; }
.camhead { position: absolute; left: 0; top: 0; width: 38px; height: 38px; background: #fff; border: 3px solid #1414e0; border-radius: 50%; display: flex; align-items: center; justify-content: center; z-index: 1; }
.camtxt { position: absolute; left: 25px; top: 4px; width: 69px; height: 29px; background: #eef3ff; border: 1px solid #a8b8ff; border-radius: 0 14px 14px 0; color: #2020e0; font: 13px/25px "Noto Sans CJK SC", sans-serif; padding-left: 17px; }
.camx { position: absolute; left: 91px; top: -1px; color: #ddd; font: bold 14px "Liberation Sans", sans-serif; }
.speed { position: absolute; left: 1257px; top: 947px; width: 120px; height: 55px; overflow: hidden; }
.gauge { position: absolute; left: 0; top: 0; width: 58px; height: 58px; border-radius: 50%; background: #454a56; color: #eee; }
.gauge svg { position: absolute; left: 0; top: 0; }
.pct { position: absolute; left: 12px; top: 13px; font: 300 27px "Liberation Sans", sans-serif; }
.pct small { font-size: 10px; }
.speedpill { position: absolute; left: 29px; top: 8px; width: 90px; height: 42px; background: #2e313b; border-radius: 0 20px 20px 0; padding: 4px 8px 0 34px; display: flex; flex-direction: column; gap: 5px; }
.sp { display: flex; align-items: center; font: 11px/16px "Liberation Sans", sans-serif; color: #888; }
.sp i { font: bold 11px "DejaVu Sans", sans-serif; width: 14px; }
.sp .up { color: #40b0ff; } .sp .dn { color: #30d050; }
.sp b { color: #ddd; margin-left: auto; font-weight: 700; font-size: 12px; }
.notice { position: absolute; left: 1585px; top: 825px; width: 320px; height: 177px; background: #fff; border: 1px solid #aaa; box-shadow: -3px 0 6px #ccc; }
.ntitle { height: 24px; padding: 1px 0 0 2px; display: flex; justify-content: space-between; font: 12.500px "Noto Sans CJK SC", sans-serif; color: #aaa; }
.ntitle b { font: 19px "Liberation Sans", sans-serif; margin-right: 0; color: #999; }
.nbody { font: 12px "Liberation Mono", monospace; letter-spacing: -.9px; padding-left: 1px; margin-top: 2px; color: #111; }
.nlink { position: absolute; left: 5px; bottom: -3px; color: #0000f0; text-decoration: underline; font: 13px "Noto Sans CJK SC", sans-serif; }
```

FILE: chart.js
```js
// Candle series: [kind, high, bodyTop, bodyBottom, low]; y is kept in the two source scales.
var A = [
["c",220,222,250,258],["r",220,246,248,266],["r",225,238,248,268],["r",195,220,236,238],["c",218,218,275,280],["c",255,273,285,318],["c",285,285,318,330],["r",282,304,316,345],["c",290,303,312,340],["c",268,309,355,358],
["c",357,357,425,438],["r",365,385,425,443],["r",322,330,388,402],["c",330,330,402,405],["r",358,363,407,410],["r",300,310,362,365],["r",270,285,302,330],["r",245,265,285,295],["r",220,220,265,290],["c",218,218,258,262],
["c",255,255,292,300],["c",285,303,312,318],["c",295,311,314,335],["r",265,265,317,320],["r",175,205,262,275],["c",195,205,232,238],["c",225,232,256,265],["c",245,258,282,295],["r",225,240,362,362],["r",215,230,256,282],
["r",210,222,226,228],["c",215,223,226,245],["r",175,185,218,225],["r",155,175,177,195],["r",140,160,172,200],["c",145,155,165,170],["c",150,155,195,200],["r",170,185,193,205],["c",175,183,190,200],["c",190,195,228,235],
["c",215,228,265,270],["c",265,267,300,320],["r",265,295,299,300],["r",240,256,292,295],["c",230,255,267,285],["c",255,265,272,275],["r",180,205,265,282],["c",205,205,220,222],["c",205,222,240,245],["c",220,240,258,260],
["c",258,258,335,340],["c",330,330,420,438],["c",350,402,425,452],["r",390,395,425,472],["r",358,382,388,400],["r",365,384,385,400],["c",358,381,393,400],["c",385,394,398,438],["r",340,346,392,405],["c",335,345,365,372],
["r",325,337,365,370],["c",310,330,375,380],["r",370,375,377,410],["c",365,372,428,432],["c",400,418,428,430],["c",425,445,452,490],["c",430,458,522,525],["r",475,484,515,548],["c",480,482,548,556],["r",490,545,547,548],
["r",495,517,538,562],["c",510,517,595,605],["c",558,595,657,670],["c",622,652,710,735],["c",695,712,765,765],["c",735,760,782,802],["r",695,722,785,802],["r",640,652,710,750],["c",635,652,710,712],["r",570,578,682,685],
["r",575,595,597,625],["c",562,575,592,632],["r",575,578,595,630],["c",575,577,592,612],["r",588,590,592,625],["c",590,598,640,640],["c",615,640,665,695]
];
var B = [
["c",365,370,376,405],["r",380,395,397,410],["c",345,365,405,420],["r",320,348,405,410],["r",325,330,346,370],["r",290,306,330,330],["r",230,235,310,318],["c",215,240,248,260],["r",195,198,248,250],["c",192,207,213,235],
["c",215,215,270,315],["r",170,190,268,275],["r",125,136,188,190],["c",128,144,205,210],["c",192,207,252,252],["c",250,255,258,300],["c",240,262,295,300],["c",265,295,305,330],["r",270,280,305,320],["c",270,278,282,310],
["c",278,278,330,340],["r",290,307,330,332],["r",265,270,305,310],["r",232,243,270,280],["r",212,236,240,250],["c",235,242,290,295],["c",265,285,297,310],["r",277,295,298,300],["c",277,288,320,322],["c",302,331,334,340],
["c",332,333,385,410],["c",338,385,418,420],["c",385,420,473,485],["r",420,435,466,520],["c",530,530,698,705],["c",695,696,732,750],["c",705,735,777,795],["r",715,725,770,805],["c",687,722,725,745],["c",678,722,725,735],
["r",705,716,718,740],["c",708,717,743,758],["c",723,744,785,812],["r",752,781,788,795],["r",752,770,772,798],["c",755,768,815,815],["c",785,822,848,848],["c",830,850,857,880],["c",812,852,885,900],["r",850,858,892,915],
["r",805,814,856,858],["r",785,796,805,832],["c",785,787,810,820],["r",800,805,813,842],["c",790,808,835,880],["c",808,840,860,875],["r",835,858,861,865],["c",850,853,866,888],["r",815,832,868,910],["c",805,826,851,865],
["r",815,823,856,902]
];
var out = [];
function ya(v) { return 50 + v / 3; }
function yb(v) { return 150 + v / 3; }
function xa(v) { return 240 + v / 1.96; }
function xb(v) { return 1000 + v / 2.45; }

function candle(i, d, fy) {
  var x = Math.round(249 + 9.136 * i);
  var hi = Math.round(fy(d[1])), top = Math.round(fy(d[2])), bot = Math.round(fy(d[3])), lo = Math.round(fy(d[4]));
  if (bot - top < 2) bot = top + 2;
  if (d[0] === "c") {
    out.push('<path d="M' + (x + .5) + ' ' + hi + 'V' + lo + '" stroke="#54ffff"/>');
    out.push('<rect x="' + (x - 3) + '" y="' + top + '" width="7" height="' + (bot - top) + '" fill="#54ffff"/>');
  } else {
    out.push('<path d="M' + (x + .5) + ' ' + hi + 'V' + lo + '" stroke="#ff0000"/>');
    out.push('<rect x="' + (x - 3 + .5) + '" y="' + (top + .5) + '" width="6" height="' + (bot - top) + '" fill="#000" stroke="#ff0000"/>');
  }
}
A.forEach(function (d, i) { candle(i, d, ya); });
B.forEach(function (d, i) { candle(i + A.length, d, yb); });

function thick(col, x1, y1, x2, y2) {
  out.push('<path d="M' + x1 + ' ' + y1 + 'L' + x2 + ' ' + y2 + '" stroke="' + col + '" stroke-width="4" stroke-linecap="round"/>');
}
[["#00ff00",302,299,488,293],["#00ff00",555,230,700,231],["#ff0000",733,232,827,202],["#00ff00",859,200,897,350],["#ff0000",930,345,1078,328],["#00ff00",1109,328,1129,433],["#ff0000",1160,428,1418,572],["#00ff00",1450,570,1540,698],["#ff0000",520,228,520,295]].forEach(function (s) {
  thick(s[0], xa(s[1]), ya(s[2]), xa(s[3]), ya(s[4]));
});
[["#ff0000",108,398,198,294],["#00ff00",243,296,425,296],["#ff0000",465,298,604,240],["#00ff00",645,240,667,315],["#ff0000",710,312,1275,800],["#00ff00",1316,797,1316,880]].forEach(function (s) {
  thick(s[0], xb(s[1]), yb(s[2]), xb(s[3]), yb(s[4]));
});

function down(x, y) {
  x = Math.round(x); y = Math.round(y);
  out.push('<path d="M' + (x + .5) + ' ' + (y - 5) + 'V' + y + '" stroke="#00e000"/>');
  out.push('<path d="M' + (x - 5) + ' ' + y + 'H' + (x + 6) + 'L' + (x + .5) + ' ' + (y + 11) + 'Z" fill="#ff00ff"/>');
}
function up(x, y) {
  x = Math.round(x); y = Math.round(y);
  out.push('<path d="M' + (x + .5) + ' ' + (y + 8) + 'V' + (y + 15) + '" stroke="#ff0000"/>');
  out.push('<path d="M' + (x - 5) + ' ' + (y + 10) + 'H' + (x + 6) + 'V' + (y + 8) + 'H' + (x - 5) + 'Z" fill="#0000ff"/>');
  out.push('<path d="M' + (x + .5) + ' ' + (y - 1) + 'L' + (x + 5) + ' ' + (y + 8) + 'H' + (x - 4) + 'Z" fill="#ff0000"/>');
}
[[287,258],[538,186],[842,160],[1092,285],[1434,528]].forEach(function (p) { down(xa(p[0]), ya(p[1])); });
[[219,252],[623,198],[1294,757]].forEach(function (p) { down(xb(p[0]), yb(p[1])); });
[[502,305],[716,245],[913,358],[1147,442],[1558,710]].forEach(function (p) { up(xa(p[0]), ya(p[1])); });
[[444,310],[689,325],[1338,890]].forEach(function (p) { up(xb(p[0]), yb(p[1])); });

// resistance / bottom bars
out.push('<rect x="1345" y="323" width="261" height="3" fill="#707070"/>');
out.push('<rect x="1277" y="465" width="329" height="4" fill="#444"/>');

// MACD lines
var L1 = [[18,148],[75,152],[135,168],[180,178],[210,190],[250,194],[300,182],[340,170],[385,167],[430,172],[450,160],[530,162],[580,153],[640,139],[700,140],[765,161],[830,162],[850,157],[900,157],[960,195],[1030,202],[1090,195],[1140,197],[1200,220],[1240,235],[1285,245],[1360,299],[1415,297],[1450,278],[1490,268],[1530,269]];
var L2 = [[50,270],[150,290],[200,283],[300,254],[330,253],[390,238],[480,257],[570,268],[640,258],[700,262],[770,273],[850,302],[900,350],[940,378],[1000,390],[1100,410],[1180,436],[1260,428],[1380,438],[1450,435]];
var pts = L1.map(function (p) { return [xa(p[0]), 460 + p[1] / 3]; }).concat(L2.map(function (p) { return [xb(p[0]), 460 + p[1] / 3]; }));
var white = pts.map(function (p) { return p[0].toFixed(1) + ',' + (p[1] + .6 + ((p[0] > 1345 && p[0] < 1385) ? 3 : 0)).toFixed(1); }).join(' ');
var yellow = pts.map(function (p) { return p[0].toFixed(1) + ',' + p[1].toFixed(1); }).join(' ');
out.push('<polyline points="' + white + '" fill="none" stroke="#fff" stroke-width="1.500"/>');
out.push('<polyline points="' + yellow + '" fill="none" stroke="#ffff00" stroke-width="1.500"/>');

// MACD histogram ticks
for (var i = 0; i < A.length + B.length; i++) {
  var x = Math.round(249 + 9.136 * i);
  var cyanHi = (x > 335 && x < 352) || (x > 610 && x < 635) || (x > 715 && x < 735) || (x > 825 && x < 945) || (x > 1340 && x < 1375);
  var cyanLo = (x > 250 && x < 335) || (x > 1020 && x < 1065) || (x > 1170 && x < 1340) || (x > 1375 && x < 1450);
  var red = (x > 385 && x < 410) || (x > 470 && x < 600) || (x > 955 && x < 985) || (x > 1080 && x < 1155);
  var big = (x > 1352 && x < 1372);
  if (cyanHi || cyanLo) {
    out.push('<path d="M' + (x + .5) + ' 575V' + (575 + (big ? 8 : cyanHi ? 3 + (i % 2) : 1)) + '" stroke="#54ffff"/>');
  } else if (red) {
    out.push('<path d="M' + (x + .5) + ' 575V' + (575 - (i % 3 === 0 ? 3 : 1)) + '" stroke="#ff2020"/>');
  }
}
// crosshair
out.push('<path d="M413.500 95V457M413.500 505V606" stroke="#fff"/>');

document.getElementById("series").setAttribute("shape-rendering", "crispEdges");
document.getElementById("series").innerHTML = out.join("");
```
